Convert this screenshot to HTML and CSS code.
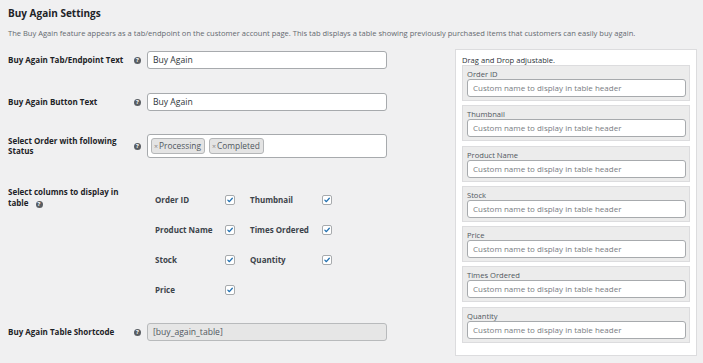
FILE: index.html
```html
<!DOCTYPE html>
<html>
<head>
<meta charset="utf-8">
<link rel="stylesheet" href="styles.css">
</head>
<body>
<div class="wrap">
  <h2 class="title">Buy Again Settings</h2>
  <p class="desc">The Buy Again feature appears as a tab/endpoint on the customer account page. This tab displays a table showing previously purchased items that customers can easily buy again.</p>
  <div class="content">
    <div class="form">
      <div class="row r1">
        <label class="lbl">Buy Again Tab/Endpoint Text</label>
        <span class="help">?</span>
        <div class="input">Buy Again</div>
      </div>
      <div class="row r2">
        <label class="lbl">Buy Again Button Text</label>
        <span class="help">?</span>
        <div class="input">Buy Again</div>
      </div>
      <div class="row r3">
        <label class="lbl">Select Order with following Status</label>
        <span class="help">?</span>
        <div class="tags">
          <span class="tag"><span class="x">×</span>Processing</span>
          <span class="tag"><span class="x">×</span>Completed</span>
        </div>
      </div>
      <div class="row r4">
        <label class="lbl lbl-wide">Select columns to display in table<span class="help inline">?</span></label>
        <div class="checks">
          <span class="clbl">Order ID</span><span class="cb"><svg viewBox="0 0 10 10"><path d="M2.3 5.2 L4.2 7.1 L7.9 2.8" /></svg></span>
          <span class="clbl">Thumbnail</span><span class="cb"><svg viewBox="0 0 10 10"><path d="M2.3 5.2 L4.2 7.1 L7.9 2.8" /></svg></span>
          <span class="clbl">Product Name</span><span class="cb"><svg viewBox="0 0 10 10"><path d="M2.3 5.2 L4.2 7.1 L7.9 2.8" /></svg></span>
          <span class="clbl">Times Ordered</span><span class="cb"><svg viewBox="0 0 10 10"><path d="M2.3 5.2 L4.2 7.1 L7.9 2.8" /></svg></span>
          <span class="clbl">Stock</span><span class="cb"><svg viewBox="0 0 10 10"><path d="M2.3 5.2 L4.2 7.1 L7.9 2.8" /></svg></span>
          <span class="clbl">Quantity</span><span class="cb"><svg viewBox="0 0 10 10"><path d="M2.3 5.2 L4.2 7.1 L7.9 2.8" /></svg></span>
          <span class="clbl">Price</span><span class="cb"><svg viewBox="0 0 10 10"><path d="M2.3 5.2 L4.2 7.1 L7.9 2.8" /></svg></span>
        </div>
      </div>
      <div class="row r5">
        <label class="lbl">Buy Again Table Shortcode</label>
        <span class="help">?</span>
        <div class="input disabled">[buy_again_table]</div>
      </div>
    </div>
    <div class="panel">
      <div class="note">Drag and Drop adjustable.</div>
      <div class="items">
        <div class="item"><div class="ilbl">Order ID</div><div class="iinput">Custom name to display in table header</div></div>
        <div class="item"><div class="ilbl">Thumbnail</div><div class="iinput">Custom name to display in table header</div></div>
        <div class="item"><div class="ilbl">Product Name</div><div class="iinput">Custom name to display in table header</div></div>
        <div class="item"><div class="ilbl">Stock</div><div class="iinput">Custom name to display in table header</div></div>
        <div class="item"><div class="ilbl">Price</div><div class="iinput">Custom name to display in table header</div></div>
        <div class="item"><div class="ilbl">Times Ordered</div><div class="iinput">Custom name to display in table header</div></div>
        <div class="item"><div class="ilbl">Quantity</div><div class="iinput">Custom name to display in table header</div></div>
      </div>
    </div>
  </div>
</div>
</body>
</html>
```

FILE: styles.css
```css
* { box-sizing: border-box; }
html, body { margin: 0; padding: 0; background: #f0f0f1; }
body {
  font-family: "Open Sans", "Noto Sans", sans-serif;
  color: #1d2327;
  width: 703px;
  height: 363px;
  overflow: hidden;
}
.wrap { padding: 0 0 0 8px; }
.title {
  margin: 0;
  padding-top: 5px;
  font-size: 10px;
  line-height: 16px;
  font-weight: 700;
  color: #1d2327;
}
.desc {
  margin: 7px 0 0 0;
  font-size: 7.55px;
  line-height: 10px;
  color: #646970;
  white-space: nowrap;
}
.content {
  display: flex;
  align-items: flex-start;
  margin-top: 12px;
}
.form {
  width: 379px;
  display: flex;
  flex-direction: column;
  padding-top: 1px;
}
.row {
  display: grid;
  grid-template-columns: 124px 15px 240px;
  align-items: center;
}
.lbl {
  font-size: 8px;
  font-weight: 700;
  line-height: 10.5px;
  color: #1d2327;
  padding-right: 4px;
}
.help {
  display: inline-block;
  width: 7px;
  height: 7px;
  border-radius: 50%;
  background: #595d62;
  color: #fff;
  font-size: 6px;
  font-weight: 700;
  line-height: 7px;
  text-align: center;
  justify-self: start;
  margin-left: 2px;
}
.help.inline { margin-left: 7px; vertical-align: -0.5px; line-height: 7px; }
.input {
  height: 18px;
  border: 1px solid #a7aaad;
  border-radius: 3px;
  background: #fff;
  font-size: 8.6px;
  line-height: 16px;
  padding: 0 5px;
  color: #2c3338;
}
.input.disabled {
  background: #e6e6e6;
  border-color: #b8babc;
  color: #50575e;
}
.r2 { margin-top: 24px; }
.r3 { margin-top: 23px; }
.tags {
  height: 24px;
  border: 1px solid #a7aaad;
  border-radius: 3px;
  background: #fff;
  display: flex;
  align-items: center;
  gap: 4px;
  padding: 0 3px;
}
.tag {
  height: 16px;
  border: 1px solid #b4b6b8;
  border-radius: 3px;
  background: #e4e4e4;
  font-size: 8.4px;
  line-height: 14px;
  padding: 0 3px 0 2px;
  color: #50575e;
}
.tag .x { color: #888; font-size: 7px; margin-right: 1px; }
.r4 {
  margin-top: 29px;
  align-items: start;
}
.lbl-wide { grid-column: 1 / 3; width: 124px; }
.checks {
  display: grid;
  grid-template-columns: 70px 25px 72px 10px;
  grid-auto-rows: 10px;
  row-gap: 20px;
  padding-left: 8px;
  margin-top: 8px;
  align-items: center;
}
.clbl {
  font-size: 8px;
  font-weight: 700;
  color: #3c434a;
  line-height: 10px;
  white-space: nowrap;
}
.cb {
  width: 10px;
  height: 10px;
  border: 1px solid #a7aaad;
  border-radius: 2px;
  background: #fff;
  display: block;
}
.cb svg { display: block; width: 8px; height: 8px; }
.cb path { fill: none; stroke: #2271b1; stroke-width: 1.6; stroke-linecap: round; stroke-linejoin: round; }
.r5 { margin-top: 28px; }

.panel {
  margin-left: 68px;
  width: 242px;
  margin-top: -1px;
  background: #fff;
  border: 1px solid #dcdcde;
  padding: 5px 6px 12px 6px;
}
.note {
  font-size: 7.6px;
  line-height: 10px;
  color: #2c3338;
}
.items { display: flex; flex-direction: column; gap: 4.3px; }
.item {
  background: #ececec;
  border: 1px solid #dcdcde;
  padding: 3px 3px 3px 4px;
}
.ilbl {
  font-size: 7.6px;
  line-height: 10px;
  color: #50575e;
}
.iinput {
  height: 18px;
  border: 1px solid #a7aaad;
  border-radius: 3px;
  background: #fff;
  font-size: 8px;
  line-height: 16px;
  padding: 0 5px;
  color: #787c82;
}
```
